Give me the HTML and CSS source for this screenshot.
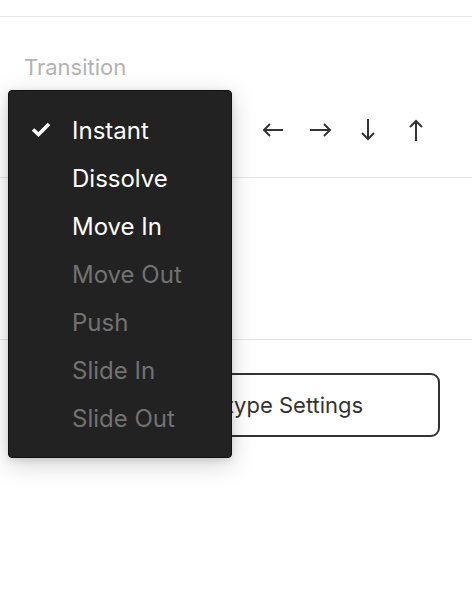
FILE: index.html
```html
<!DOCTYPE html>
<html>
<head>
<meta charset="utf-8">
<link rel="stylesheet" href="styles.css">
</head>
<body>
<div class="panel">
  <div class="section top-gap"></div>
  <div class="section transition">
    <div class="label">Transition</div>
    <div class="dir-row">
      <span class="select-space"></span>
      <div class="arrows">
        <svg class="arrow" width="22" height="14" viewBox="0 0 22 14"><path d="M2 7H21M8 1L2 7L8 13" fill="none" stroke="#333" stroke-width="2"/></svg>
        <svg class="arrow" width="22" height="14" viewBox="0 0 22 14"><path d="M0 7H20M14 1L20 7L14 13" fill="none" stroke="#333" stroke-width="2"/></svg>
        <svg class="arrow" width="14" height="22" viewBox="0 0 14 22"><path d="M7 0V20M1 14L7 20L13 14" fill="none" stroke="#333" stroke-width="2"/></svg>
        <svg class="arrow" width="14" height="22" viewBox="0 0 14 22"><path d="M7 22V2M1 8L7 2L13 8" fill="none" stroke="#333" stroke-width="2"/></svg>
      </div>
    </div>
  </div>
  <div class="section empty"></div>
  <div class="section actions">
    <button class="btn">Open Prototype Settings</button>
  </div>
</div>

<div class="menu">
  <div class="item"><svg class="check" width="20" height="15" viewBox="0 0 20 15"><path d="M2 7.5L7.5 12.5L18 2" fill="none" stroke="#fff" stroke-width="3.6"/></svg><span>Instant</span></div>
  <div class="item"><span>Dissolve</span></div>
  <div class="item"><span>Move In</span></div>
  <div class="item disabled"><span>Move Out</span></div>
  <div class="item disabled"><span>Push</span></div>
  <div class="item disabled"><span>Slide In</span></div>
  <div class="item disabled"><span>Slide Out</span></div>
</div>
</body>
</html>
```

FILE: styles.css
```css
html, body {
  margin: 0;
  padding: 0;
  background: #fff;
  font-family: Inter, "Noto Sans", sans-serif;
}

.panel {
  width: 472px;
}

.section {
  border-bottom: 1px solid #e5e5e5;
}

.top-gap {
  height: 16px;
}

.transition {
  height: 161px;
  box-sizing: border-box;
  padding: 37px 0 0 24px;
}

.label {
  font-size: 22px;
  line-height: 26px;
  color: #b3b3b3;
}

.dir-row {
  display: flex;
  align-items: center;
  margin-top: 34px;
  height: 32px;
}

.select-space {
  width: 238px;
}

.arrows {
  display: flex;
  align-items: center;
}

.arrow {
  display: block;
  margin-right: 26px;
}

.arrows .arrow:nth-child(3) {
  margin-left: 3px;
  margin-right: 34px;
}

.empty {
  height: 161px;
}

.actions {
  border-bottom: none;
  padding: 33px 32px 0 32px;
}

.btn {
  display: block;
  width: 408px;
  height: 64px;
  box-sizing: border-box;
  border: 2px solid #333;
  border-radius: 9px;
  background: #fff;
  font-family: Inter, "Noto Sans", sans-serif;
  font-size: 22px;
  color: #333;
  text-align: center;
  padding: 0;
}

.menu {
  position: absolute;
  left: 8px;
  top: 90px;
  width: 224px;
  height: 368px;
  box-sizing: border-box;
  padding: 15px 0 17px;
  background: #222;
  border: 1px solid #111;
  border-radius: 4px;
  box-shadow: 0 6px 24px rgba(0, 0, 0, 0.18), 0 2px 6px rgba(0, 0, 0, 0.12);
}

.item {
  position: relative;
  height: 48px;
  display: flex;
  align-items: center;
  padding-left: 63px;
  font-size: 24px;
  color: #fff;
}

.item.disabled {
  color: #727272;
}

.check {
  position: absolute;
  left: 22px;
  top: 16px;
}
```
